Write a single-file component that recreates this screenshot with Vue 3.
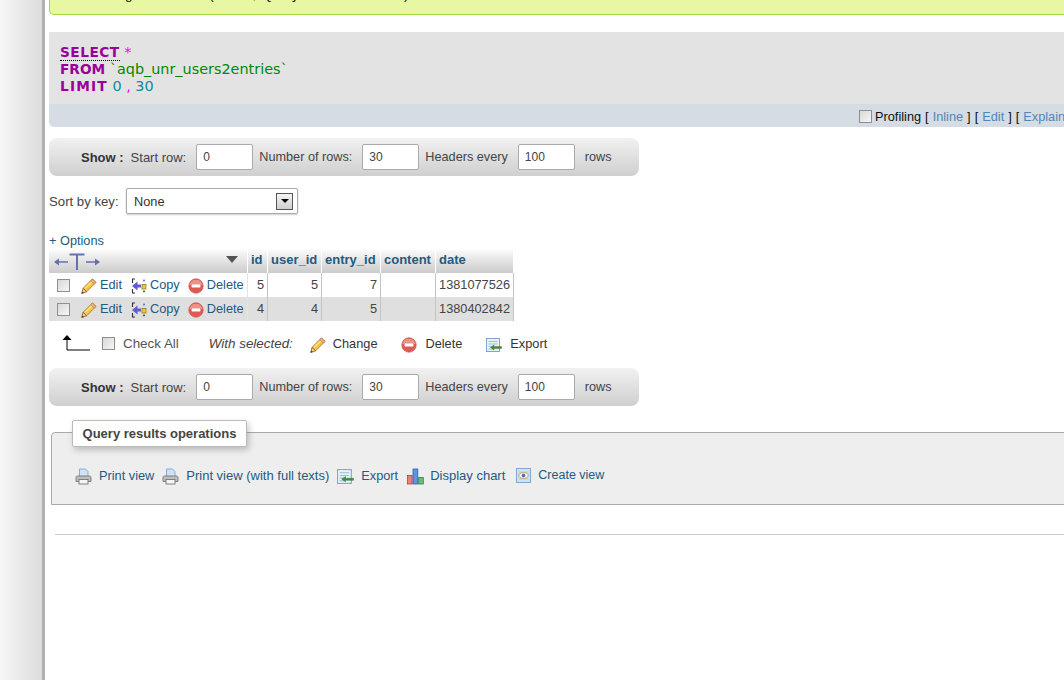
<script setup>
const pageBar = [
  { label: 'Start row:', value: '0', first: true },
  { label: 'Number of rows:', value: '30' },
  { label: 'Headers every', value: '100' }
]
const rows = [
  { id: 5, user: 5, entry: 7, date: '1381077526', even: false },
  { id: 4, user: 4, entry: 5, date: '1380402842', even: true }
]
const ops = [
  { icon: 'i-print', text: 'Print view', cls: 'op-a' },
  { icon: 'i-print', text: 'Print view (with full texts)', cls: 'op-b' },
  { icon: 'i-export', text: 'Export', cls: 'op-c' },
  { icon: 'i-chart', text: 'Display chart', cls: 'op-d' },
  { icon: 'i-view', text: 'Create view', cls: 'op-e' }
]
</script>

<template>
  <div class="page">
    <svg class="defs" aria-hidden="true">
      <defs>
        <symbol id="i-pencil" viewBox="0 0 16 16">
          <path d="M11.4 1 15 4.4 5.6 13.8 2 10.4z" fill="#f4c543" stroke="#b9822a" stroke-width="1" />
          <path d="M4 10.2 11.8 3" stroke="#fbe392" stroke-width="1.3" fill="none" />
          <path d="M11.4 1 15 4.4 13.4 6 9.8 2.6z" fill="#e7b59c" stroke="#a97a4a" stroke-width=".7" />
          <path d="M2 10.4 5.6 13.8 .7 15.6z" fill="#ecd3a4" stroke="#8a5a24" stroke-width=".8" />
          <path d="M.7 15.6 1.3 13.4 3 15z" fill="#5b3a1a" />
        </symbol>
        <symbol id="i-copy" viewBox="0 0 16 16">
          <path d="M4 1H1.5V5M1.5 11V15H4" fill="none" stroke="#333" stroke-width="1.1" />
          <path d="M1 8 6.5 3.5V6.5H10V9.5H6.5V12.5z" fill="#6459d6" />
          <rect x="11" y="6.5" width="4" height="4.5" fill="#f4c92e" stroke="#8a6f10" stroke-width=".7" />
          <rect x="12.2" y="1.6" width="1.6" height="1.8" fill="#6459d6" />
          <rect x="12.2" y="12.6" width="1.6" height="1.6" fill="#333" />
        </symbol>
        <symbol id="i-delete" viewBox="0 0 16 16">
          <circle cx="8" cy="8" r="7.2" fill="#dd5b52" stroke="#c8554c" stroke-width=".7" />
          <path d="M1.6 7A6.5 6.5 0 0 1 14.4 7z" fill="#f0a49c" opacity=".75" />
          <rect x="3.6" y="6.6" width="8.8" height="2.8" rx=".4" fill="#fff" />
        </symbol>
        <symbol id="i-print" viewBox="0 0 17 17">
          <path d="M4.5 1H10.5L13 3.5V9H4.5z" fill="#cfe2f6" stroke="#7ba6d4" stroke-width=".9" />
          <path d="M1 9.5Q1 8 2.5 8H14.5Q16 8 16 9.5V13.5H1z" fill="#bdbdbd" stroke="#777" stroke-width=".9" />
          <rect x="4" y="11.5" width="9" height="4.5" fill="#f5f5f5" stroke="#777" stroke-width=".9" />
        </symbol>
        <symbol id="i-export" viewBox="0 0 16 16">
          <rect x=".5" y="1.5" width="13" height="13" fill="#eaf2fb" stroke="#7ea6cf" />
          <path d="M2.5 4.5H11.5M2.5 7H11.5M2.5 9.5H7M2.5 12H7" stroke="#9fb9d6" stroke-width="1" />
          <path d="M4.5 10.5 8 8V9.6H15.5V11.6H8V13z" fill="#3f8f3a" stroke="#2a6a28" stroke-width=".4" />
        </symbol>
        <symbol id="i-chart" viewBox="0 0 17 17">
          <rect x=".5" y="7.5" width="4.6" height="8.5" fill="#ef7d7d" stroke="#c23a3a" stroke-width=".8" />
          <rect x="6" y="1" width="4.8" height="15" fill="#5f95de" stroke="#2f5fa8" stroke-width=".8" />
          <rect x="11.7" y="9.5" width="4.6" height="6.5" fill="#6cbf78" stroke="#2f8040" stroke-width=".8" />
        </symbol>
        <symbol id="i-view" viewBox="0 0 15 15">
          <rect x=".5" y=".5" width="14" height="14" fill="#cfe0f4" stroke="#7fa6d6" />
          <rect x="2.5" y="3" width="10" height="9" fill="#d9d2c2" />
          <ellipse cx="7.5" cy="7.5" rx="4.6" ry="2.8" fill="#f7f4ec" stroke="#a08c6c" stroke-width=".7" />
          <circle cx="7.5" cy="7.5" r="1.8" fill="#3f6fb5" />
        </symbol>
      </defs>
    </svg>

    <aside class="rail"></aside>

    <main class="main">
      <div class="msg">
        <p class="msg-text"><span class="tick">✓</span> Showing rows 0 - 1 (2 total, Query took 0.0005 sec)</p>
      </div>

      <section class="sql">
        <div><b class="kw kw-doc">SELECT</b> <span class="punct">*</span></div>
        <div><b class="kw">FROM</b> <span class="tbl">`aqb_unr_users2entries`</span></div>
        <div><b class="kw kw-wide">LIMIT</b> <span class="num">0</span> <span class="punct">,</span> <span class="num">30</span></div>
      </section>
      <div class="sql-tools">
        <input type="checkbox" class="cb cb-tool" />
        <span class="prof">Profiling</span>
        <span class="br">[</span><a class="lnk">Inline</a><span class="br">]</span>
        <span class="br">[</span><a class="lnk">Edit</a><span class="br">]</span>
        <span class="br">[</span><a class="lnk">Explain SQL</a><span class="br">]</span>
      </div>

      <div class="nav">
        <b class="show">Show :</b>
        <template v-for="p in pageBar" :key="p.label">
          <span :class="{ 'first-label': p.first }">{{ p.label }}</span>
          <input class="num-in" type="text" :value="p.value" />
        </template>
        <span class="nav-end">rows</span>
      </div>

      <div class="sort">
        <span class="sort-label">Sort by key:</span>
        <div class="select">
          <span>None</span>
          <span class="sel-btn"><i class="sel-tri"></i></span>
        </div>
      </div>

      <a class="options">+ Options</a>

      <table class="grid">
        <thead>
          <tr>
            <th class="c-act">
              <div class="head-act">
                <svg class="tee" width="46" height="20" viewBox="0 0 46 20">
                  <g fill="none" stroke="#6570b0">
                    <path d="M1 10H14M32 10H45" stroke-width="1.3" />
                    <path d="M15.5 2.5H30.5M23 2.5V18" stroke-width="2" />
                  </g>
                  <path d="M0 10 5 6.5V13.5zM46 10 41 6.5V13.5z" fill="#6570b0" />
                </svg>
                <i class="tri"></i>
              </div>
            </th>
            <th class="c-id">id</th>
            <th class="c-user">user_id</th>
            <th class="c-entry">entry_id</th>
            <th class="c-content">content</th>
            <th class="c-date">date</th>
          </tr>
        </thead>
        <tbody>
          <tr v-for="r in rows" :key="r.id" :class="{ even: r.even }">
            <td class="c-act">
              <div class="acts">
                <input type="checkbox" class="cb" />
                <svg class="ic a1" width="16" height="16"><use href="#i-pencil" /></svg>
                <a class="lnk">Edit</a>
                <svg class="ic a2" width="16" height="16"><use href="#i-copy" /></svg>
                <a class="lnk">Copy</a>
                <svg class="ic a3" width="16" height="16"><use href="#i-delete" /></svg>
                <a class="lnk">Delete</a>
              </div>
            </td>
            <td class="r">{{ r.id }}</td>
            <td class="r">{{ r.user }}</td>
            <td class="r">{{ r.entry }}</td>
            <td></td>
            <td class="r">{{ r.date }}</td>
          </tr>
        </tbody>
      </table>

      <div class="bulk">
        <svg class="bulk-arrow" width="28" height="16" viewBox="0 0 28 16">
          <path d="M5 3V15H28" fill="none" stroke="#000" stroke-width="1" />
          <path d="M5 0 9.5 5H.5z" fill="#000" />
        </svg>
        <input type="checkbox" class="cb bulk-cb" />
        <span class="check-all">Check All</span>
        <i class="with">With selected:</i>
        <svg class="ic b1" width="16" height="16"><use href="#i-pencil" /></svg>
        <span class="dark">Change</span>
        <svg class="ic b2" width="16" height="16"><use href="#i-delete" /></svg>
        <span class="dark">Delete</span>
        <svg class="ic b3" width="16" height="16"><use href="#i-export" /></svg>
        <span class="dark">Export</span>
      </div>

      <div class="nav nav-2">
        <b class="show">Show :</b>
        <template v-for="p in pageBar" :key="p.label">
          <span :class="{ 'first-label': p.first }">{{ p.label }}</span>
          <input class="num-in" type="text" :value="p.value" />
        </template>
        <span class="nav-end">rows</span>
      </div>

      <section class="fset">
        <div class="legend">Query results operations</div>
        <div class="ops">
          <a v-for="o in ops" :key="o.text" class="op" :class="o.cls">
            <svg class="ic"><use :href="'#' + o.icon" /></svg>
            <span class="lnk">{{ o.text }}</span>
          </a>
        </div>
      </section>

      <hr class="rule" />
    </main>
  </div>
</template>

<style>
html, body { margin: 0; background: #fff; overflow: hidden; }
</style>

<style scoped>
.page {
  display: flex;
  width: 1064px;
  height: 680px;
  overflow: hidden;
  font-family: "Liberation Sans", Arial, sans-serif;
  font-size: 12.75px;
  color: #444;
  background: #fff;
}
.defs { position: absolute; width: 0; height: 0; }
.rail {
  flex: 0 0 42px;
  background: linear-gradient(to right, #f6f6f6, #dcdcdc);
  border-right: 3px solid #b0b0b0;
}
.main {
  flex: 1;
  min-width: 0;
  padding-left: 4px;
  overflow: hidden;
}
.lnk { color: #235a81; }
.msg {
  height: 14px;
  margin-right: -8px;
  background: #e8f8a2;
  border-bottom: 1px solid #a5d83c;
  border-left: 1px solid #a5d83c;
  border-bottom-left-radius: 5px;
  overflow: hidden;
}
.msg-text {
  margin: -13px 0 0 13px;
  line-height: 16px;
  font-size: 13.5px;
  word-spacing: 2px;
  color: #111;
  white-space: nowrap;
}
.tick { color: #2f8a2f; }

.sql {
  margin: 17px -8px 0 0;
  height: 60px;
  padding: 12px 0 0 11px;
  background: #e3e3e3;
  font-family: "DejaVu Sans", sans-serif;
  font-size: 14.4px;
  line-height: 17px;
  white-space: nowrap;
}
.kw { color: #909; font-size: 13.7px; }
.kw-doc { border-bottom: 1px dotted #000; letter-spacing: .5px; }
.kw-wide { letter-spacing: 1.2px; }
.punct { color: #f0f; }
.tbl { color: #080; }
.num { color: #1088a0; }
.sql-tools {
  display: flex;
  align-items: center;
  box-sizing: border-box;
  height: 23px;
  margin-right: -300px;
  padding: 1px 0 0 810px;
  background: #d5dce3;
  border-bottom-left-radius: 5px;
  color: #111;
  white-space: nowrap;
}
.cb {
  appearance: none;
  flex: none;
  width: 13px;
  height: 13px;
  margin: 0;
  border: 1px solid #8f8f8f;
  background: linear-gradient(135deg, #d8d8d8, #f6f6f6);
  box-sizing: border-box;
}
.cb-tool { margin-right: 3px; }
.prof { margin-right: 4px; }
.br { margin: 0 4px 0 0; }
.lnk + .br { margin-left: 4px; }
.sql-tools .lnk { color: #4f88b8; }

.nav {
  display: flex;
  align-items: center;
  width: 558px;
  height: 38px;
  margin-top: 11px;
  padding-left: 32px;
  border-radius: 8px;
  background: linear-gradient(#f1f1f1, #cfcfcf);
  font-size: 12.7px;
  white-space: nowrap;
}
.show { margin-right: 7px; color: #333; font-size: 13px; }
.first-label { font-size: 13px; }
.num-in {
  flex: none;
  width: 57px;
  height: 26px;
  box-sizing: border-box;
  margin: 0 6px 0 10px;
  padding: 0 6px;
  border: 1px solid #aaa;
  border-radius: 2px;
  background: #fff;
  color: #444;
  font: 12px "Liberation Sans", Arial, sans-serif;
}
.num-in:last-of-type { margin-right: 10px; }
.nav-2 { margin-top: 14px; }

.sort {
  display: flex;
  align-items: center;
  height: 26px;
  margin-top: 12px;
}
.sort-label { flex: none; width: 77px; font-size: 13.2px; }
.select {
  display: flex;
  align-items: center;
  justify-content: space-between;
  box-sizing: border-box;
  width: 172px;
  height: 26px;
  padding: 0 4px 0 7px;
  border: 1px solid #aaa;
  border-radius: 2px;
  box-shadow: 0 1px 2px rgba(0, 0, 0, .2);
  background: #fff;
  color: #333;
}
.sel-btn {
  display: flex;
  align-items: center;
  justify-content: center;
  box-sizing: border-box;
  width: 17px;
  height: 17px;
  border: 1px solid #555;
  background: linear-gradient(#f4f4f4, #d0d0d0);
}
.sel-tri {
  border-top: 4px solid #000;
  border-left: 4px solid transparent;
  border-right: 4px solid transparent;
}

.options {
  display: block;
  height: 16px;
  margin-top: 19px;
  line-height: 16px;
  color: #235a81;
}
.grid {
  margin-top: 1px;
  border-collapse: separate;
  border-spacing: 0;
  table-layout: fixed;
  width: 465px;
  color: #444;
}
.grid th {
  height: 23px;
  padding: 0 0 5px 3px;
  box-sizing: border-box;
  background: linear-gradient(#fafafa, #cbcbcb);
  border-right: 1px solid #fff;
  color: #235a81;
  font-size: 13px;
  font-weight: bold;
  text-align: left;
}
.grid td {
  height: 24px;
  padding: 0 3px 2px;
  box-sizing: border-box;
  border-right: 1px solid #c4c4c4;
}
.grid td.c-act { padding: 0 0 2px; border-right: 1px solid #e4e4e4; }
.grid td.r { text-align: right; }
.even td { background: #dfdfdf; }
.c-act { width: 199px; }
.c-id { width: 20px; }
.c-user { width: 54px; }
.c-entry { width: 59px; }
.c-content { width: 55px; }
.c-date { width: 78px; }
.grid th.c-act { padding: 0; }
.head-act {
  display: flex;
  align-items: center;
  justify-content: space-between;
  padding: 0 9px 0 5px;
}
.tee { margin-top: 1px; }
.tri {
  border-top: 7px solid #555;
  border-left: 6px solid transparent;
  border-right: 6px solid transparent;
  margin-top: -5px;
}
.acts {
  display: flex;
  align-items: center;
  height: 22px;
  padding-left: 8px;
  white-space: nowrap;
}
.ic { flex: none; }
.acts .cb { margin-top: 2px; }
.a1 { margin: 4px 3px 0 11px; }
.a2 { margin: 4px 3px 0 9px; }
.a3 { margin: 4px 3px 0 8px; }

.bulk {
  display: flex;
  align-items: center;
  height: 22px;
  margin-top: 11px;
  padding-left: 13px;
  white-space: nowrap;
}
.bulk-arrow { flex: none; }
.bulk-cb { margin: 0 8px 0 12px; }
.check-all { color: #555; font-size: 13.4px; }
.with { margin: 0 17px 0 30px; font-size: 13.4px; }
.dark { color: #333; }
.b1 { margin: 3px 7px 0 0; }
.b2 { margin: 3px 8px 0 24px; }
.b3 { margin: 3px 8px 0 24px; }

.fset {
  position: relative;
  box-sizing: border-box;
  height: 73px;
  margin: 26px -8px 0 2px;
  padding: 32px 0 0 23px;
  background: #eee;
  border: 1px solid #aaa;
  border-top-left-radius: 4px;
}
.legend {
  position: absolute;
  left: 20px;
  top: -13px;
  box-sizing: border-box;
  width: 175px;
  height: 27px;
  line-height: 26px;
  text-align: center;
  background: #fff;
  border: 1px solid #bbb;
  border-radius: 2px;
  box-shadow: 2px 3px 6px rgba(0, 0, 0, .22);
  font-size: 13px;
  font-weight: bold;
  color: #444;
  white-space: nowrap;
}
.ops {
  display: flex;
  align-items: center;
  white-space: nowrap;
}
.op { display: flex; align-items: center; }
.op .ic { width: 17px; height: 17px; margin-top: 3px; }
.op-a .ic, .op-b .ic { margin-right: 7px; }
.op-b { margin-left: 8px; }
.op-b .lnk { font-size: 13px; }
.op-c { margin-left: 8px; }
.op-c .ic { margin-right: 7px; }
.op-d { margin-left: 9px; }
.op-d .ic { margin-right: 6px; }
.op-d .lnk { font-size: 13px; }
.op-e { margin-left: 11px; }
.op-e .ic { width: 15px; height: 15px; margin: 0 7px 0 0; }
.op-e .lnk { font-size: 12.5px; }

.rule {
  height: 1px;
  margin: 29px -8px 0 6px;
  border: 0;
  background: #ccc;
}
</style>
